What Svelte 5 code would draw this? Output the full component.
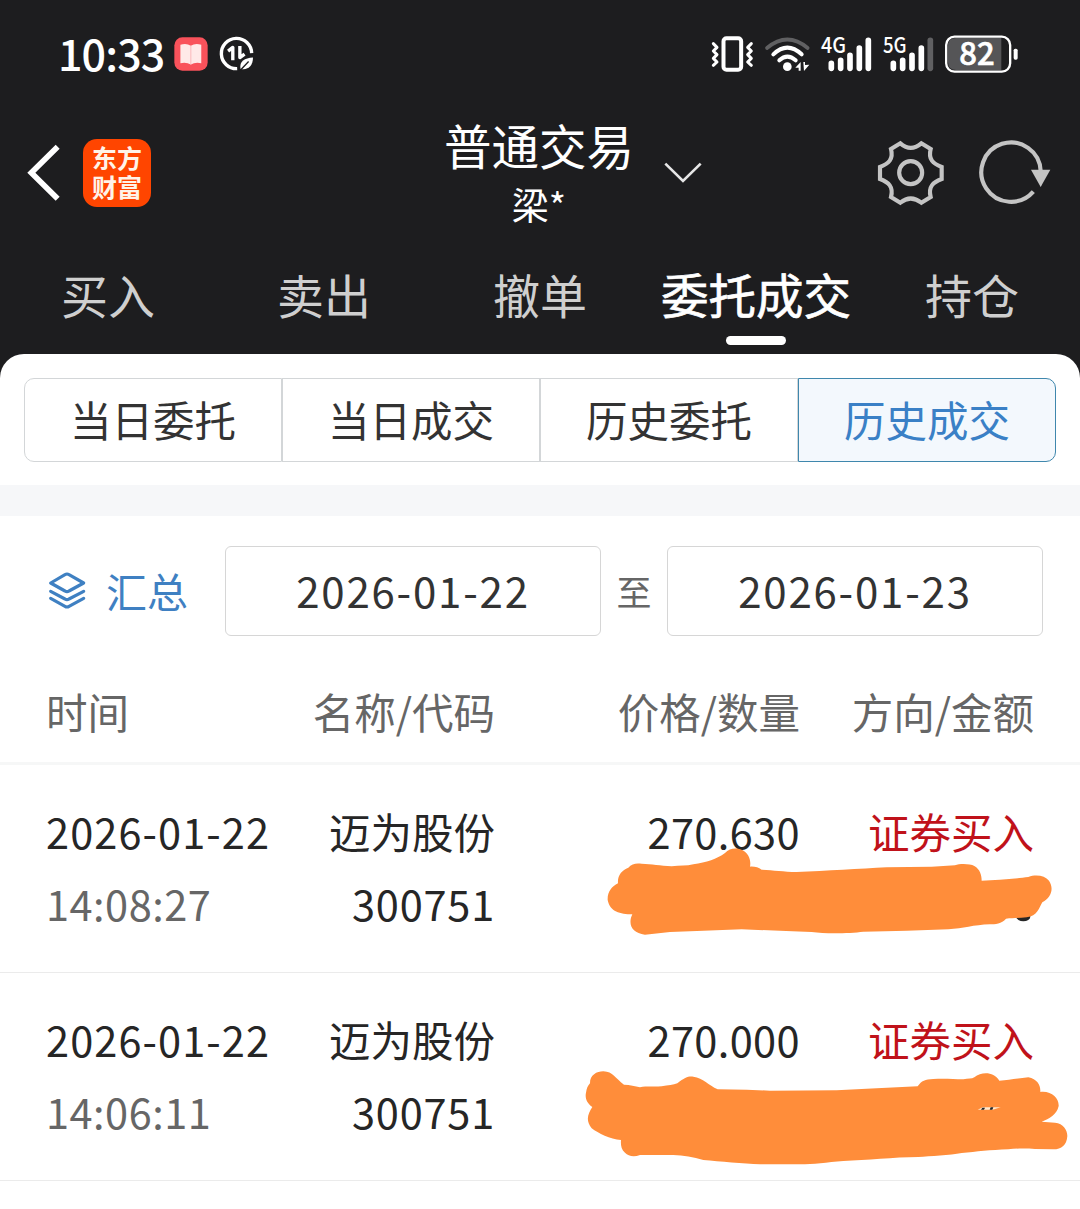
<script lang="ts">
  type Trade = {
    id: number
    date: string
    time: string
    name: string
    code: string
    price: string
    side: string
  }

  const tabs = ['买入', '卖出', '撤单', '委托成交', '持仓']
  const segments = ['当日委托', '当日成交', '历史委托', '历史成交']
  const columns = ['时间', '名称/代码', '价格/数量', '方向/金额']

  const trades: Trade[] = [
    { id: 1, date: '2026-01-22', time: '14:08:27', name: '迈为股份', code: '300751', price: '270.630', side: '证券买入' },
    { id: 2, date: '2026-01-22', time: '14:06:11', name: '迈为股份', code: '300751', price: '270.000', side: '证券买入' },
  ]

  let activeTab = $state('委托成交')
  let activeSegment = $state('历史成交')
  let from = $state('2026-01-22')
  let to = $state('2026-01-23')
</script>

<div class="screen">
  <header>
    <div class="status">
      <span class="clock">10:33</span>
      <svg class="book" viewBox="403 49 101 101">
        <rect x="404" y="50" width="99" height="99" rx="24" fill="#f9525b" />
        <path d="M422 72 Q440 66 453 75 Q466 66 484 72 V127 Q466 123 453 131 Q440 123 422 127Z" fill="#ffe9e8" />
        <path d="M453 75 V131" stroke="#fbb9bb" stroke-width="3" />
      </svg>
      <svg class="saver" viewBox="536 48 104 104" fill="none" stroke="#fff">
        <path d="M633 99 A45 45 0 1 0 590 145" stroke-width="10" />
        <path d="M563 93 L577 82 V120 M598 78 V112 L612 102" stroke-width="10" stroke-linejoin="round" />
        <path d="M600 146 C596 122 612 114 637 112 C637 136 624 150 600 146Z" fill="#fff" stroke="none" />
        <path d="M598 151 L624 124" stroke="#1d1d1f" stroke-width="4" />
      </svg>

      <div class="signals">
        <svg width="42.67" height="40" viewBox="32 40 128 120" fill="none" stroke="#fff">
          <rect x="69.500" y="53" width="53" height="94" rx="9" stroke-width="12" />
          <path d="M39 69 L50 80 L39 91 L50 102 L39 113 L50 124 L39 134" stroke-width="9" stroke-linecap="round" stroke-linejoin="round" />
          <path d="M153 69 L142 80 L153 91 L142 102 L153 113 L142 124 L153 134" stroke-width="9" stroke-linecap="round" stroke-linejoin="round" />
        </svg>
        <svg width="44.67" height="40" viewBox="194 40 134 120" fill="none" stroke="#fff" stroke-linecap="round">
          <path d="M200 82 Q261 31 322 82" stroke="#606062" stroke-width="11" />
          <path d="M219 101 Q261 61 304 101" stroke-width="12" />
          <path d="M237 119 Q261 97 286 119" stroke-width="12" />
          <circle cx="261" cy="138" r="13" fill="#fff" stroke="none" />
          <path d="M285 141 L301 124 V150 H295 V141Z M309 124 H314 V133 L327 132 L311 151Z" fill="#fff" stroke="none" />
        </svg>
        <svg width="50.67" height="40" viewBox="362 40 152 120">
          <text x="362" y="98" textLength="75" lengthAdjust="spacingAndGlyphs">4G</text>
          <g stroke="#fff" stroke-width="17" stroke-linecap="round">
            <path d="M393 128 V143 M421 119 V143 M449 104 V143 M477 82 V143 M504 59 V143" />
          </g>
        </svg>
        <svg width="50.67" height="40" viewBox="548 40 152 120">
          <text x="548" y="98" textLength="71" lengthAdjust="spacingAndGlyphs">5G</text>
          <g stroke="#fff" stroke-width="17" stroke-linecap="round">
            <path d="M579 128 V143 M607 119 V143 M635 104 V143 M663 82 V143" />
            <path d="M690 59 V143" stroke="#606062" />
          </g>
        </svg>
        <svg width="73.33" height="40" viewBox="735 40 220 120">
          <path d="M768 52 H904 V148 H768 Q744 148 744 124 V76 Q744 52 768 52Z" fill="#555557" />
          <rect x="738.500" y="48" width="192" height="105" rx="25" fill="none" stroke="#fff" stroke-width="7" />
          <rect x="941" y="84" width="12" height="33" rx="5" fill="#fff" />
          <text class="level" x="778" y="134" textLength="106" lengthAdjust="spacingAndGlyphs">82</text>
        </svg>
      </div>
    </div>

    <div class="nav">
      <button class="back" aria-label="返回">
        <svg width="34" height="58" viewBox="50 101 102 174" fill="none" stroke="#fff" stroke-width="17">
          <path d="M142 109 L63 187 L142 265" />
        </svg>
      </button>
      <div class="logo">东方<br />财富</div>
      <div class="title">
        <h1>普通交易</h1>
        <p>梁*</p>
      </div>
      <svg class="down" width="38" height="24" viewBox="705 150 114 72" fill="none" stroke="#e6e6e6" stroke-width="8">
        <path d="M709 158 L762 210 L815 158" />
      </svg>
      <div class="actions">
        <svg width="67" height="66" viewBox="50 87 201 198" fill="none" stroke="#c4c4c4" stroke-width="12.500">
          <path d="M120 97 Q151 124 183 97 L211 114 C203 145 218 158 244 168 V204 C218 214 203 227 211 258 L183 275 Q151 250 120 275 L92 258 C100 227 85 214 59 204 V168 C85 158 100 145 92 114Z" />
          <circle cx="151" cy="185" r="34.500" />
        </svg>
        <svg width="72" height="66" viewBox="356 87 216 198" fill="none" stroke="#c4c4c4" stroke-width="12.500">
          <path d="M519 242 A89 89 0 1 1 541 180" />
          <path d="M512 176 H570 L541 228Z" fill="#c4c4c4" stroke="none" />
        </svg>
      </div>
    </div>

    <nav class="tabs">
      {#each tabs as tab}
        <button class:active={tab === activeTab} onclick={() => (activeTab = tab)}>{tab}</button>
      {/each}
    </nav>
  </header>

  <main>
    <div class="segments">
      {#each segments as seg}
        <button class:active={seg === activeSegment} onclick={() => (activeSegment = seg)}>{seg}</button>
      {/each}
    </div>

    <div class="band"></div>

    <div class="filter">
      <button class="summary">
        <svg width="38" height="40" viewBox="145 692 114 120" fill="none" stroke="#3f80c2" stroke-width="9.500" stroke-linejoin="round" stroke-linecap="round">
          <path d="M196 703 Q202 699 208 703 L252 728 L208 752 Q202 756 196 752 L153 728Z" />
          <path d="M153 753 L196 776 Q202 780 208 776 L252 753" />
          <path d="M153 774 L196 798 Q202 802 208 798 L252 774" />
        </svg>
        <span>汇总</span>
      </button>
      <button class="date">{from}</button>
      <span class="until">至</span>
      <button class="date">{to}</button>
    </div>

    <div class="cols head">
      {#each columns as col}
        <span>{col}</span>
      {/each}
    </div>

    {#each trades as t, i (t.id)}
      <div class="cols row">
        <div>
          <p class="day">{t.date}</p>
          <p class="time">{t.time}</p>
        </div>
        <div>
          <p>{t.name}</p>
          <p class="code">{t.code}</p>
        </div>
        <div>
          <p class="price">{t.price}</p>
        </div>
        <div>
          <p class="side">{t.side}</p>
        </div>
        <!-- marker strokes hiding quantity and amount -->
        {#if i === 0}
          <svg class="marker first" viewBox="0 0 1560 420">
            <ellipse cx="1390" cy="290" rx="21" ry="14" fill="#262626" />
            <path
              fill="#ff8d3a"
              d="M174 190 C172 165 185 152 205 143 C215 130 230 129 245 131 C275 133 300 136 335 139 C360 136 380 138 400 133 C440 126 470 118 495 99 C515 78 550 83 565 107 C571 118 572 130 570 140 C585 139 595 143 605 149 C640 151 670 155 710 156 C800 153 900 146 980 142 L1115 140 L1185 136 C1200 130 1230 131 1243 138 C1260 148 1265 165 1265 182 C1310 180 1370 176 1405 171 C1430 162 1455 168 1467 182 C1482 205 1475 232 1447 247 C1438 262 1432 290 1400 292 C1380 295 1360 293 1338 296 C1325 312 1305 312 1290 313 C1240 315 1210 325 1165 328 L1040 332 L910 335 C870 340 800 342 755 336 C680 334 610 330 545 328 L430 332 L330 336 L255 344 C215 340 203 312 217 283 C180 283 150 275 143 240 C142 215 155 200 174 190Z"
            />
          </svg>
        {:else}
          <svg class="marker second" viewBox="0 0 1560 420">
            <path
              fill="#ff8d3a"
              d="M90 100 C90 75 110 64 130 64 C160 65 165 85 192 104 C210 105 225 108 240 112 C260 108 285 111 305 109 C325 105 340 105 352 100 C375 82 385 78 400 80 C430 85 445 105 473 118 L560 119 L630 122 L830 121 L950 115 L1073 109 C1085 92 1095 88 1120 87 C1155 84 1180 88 1210 88 C1225 85 1235 87 1243 82 C1265 65 1300 64 1318 92 C1350 90 1380 84 1405 82 C1432 88 1442 105 1441 126 C1475 122 1497 145 1496 168 C1490 195 1468 206 1445 215 L1485 218 C1510 220 1522 240 1522 258 C1520 285 1505 298 1480 298 L1425 297 C1400 295 1370 295 1345 298 C1290 300 1250 305 1205 309 C1170 316 1110 318 1075 321 C1000 322 920 330 850 333 C800 337 760 343 720 343 L600 343 C550 340 480 335 430 330 C400 320 370 317 340 315 L240 315 C220 322 205 318 195 308 C183 298 182 285 183 270 C150 268 115 250 95 235 C75 210 85 190 97 171 C78 158 75 140 78 128 C80 115 83 108 90 100Z"
            />
            <path d="M1253 179 L1268 172 L1322 172 L1298 179Z" fill="#ffe9cf" />
            <path d="M1263 179 L1267 173 H1275 L1272 179Z M1289 179 L1292 172 H1300 L1297 179Z" fill="#262626" />
          </svg>
        {/if}
      </div>
    {/each}
  </main>
</div>

<style>
  :global(body) {
    margin: 0;
    background: #fff;
  }
  .screen {
    width: 1080px;
    height: 1209px;
    overflow: hidden;
    background: #1d1d1f;
    font-family: 'Noto Sans CJK SC', sans-serif;
    color: #262626;
  }
  button {
    font: inherit;
    color: inherit;
    background: none;
    border: none;
    padding: 0;
    cursor: pointer;
  }
  svg {
    display: block;
    flex-shrink: 0;
    overflow: visible;
  }
  h1,
  p {
    margin: 0;
    font-weight: 400;
  }
  header {
    height: 354px;
    color: #fff;
  }

  .status {
    display: flex;
    align-items: center;
    height: 107px;
    padding: 0 62px 0 58px;
  }
  .clock {
    width: 116px;
    padding-bottom: 4px;
    font-size: 43px;
    font-weight: 500;
    line-height: 60px;
    letter-spacing: -0.9px;
    white-space: nowrap;
  }
  .book {
    width: 34px;
    height: 34px;
  }
  .saver {
    width: 35px;
    height: 35px;
    margin-left: 11px;
  }
  .signals {
    display: flex;
    gap: 11.33px;
    margin-left: auto;
  }
  .signals text {
    font-size: 64px;
    font-weight: 500;
    fill: #fff;
  }
  .signals .level {
    font-size: 94px;
    font-weight: 500;
    stroke: #fff;
    stroke-width: 2px;
  }

  .nav {
    display: flex;
    align-items: center;
    height: 131px;
    padding: 0 29px 0 27px;
  }
  .logo {
    box-sizing: border-box;
    width: 68px;
    height: 68px;
    margin-left: 22px;
    padding-top: 4px;
    border-radius: 14px;
    background: #ff4500;
    color: #fff3e8;
    font-size: 25px;
    font-weight: 700;
    line-height: 29px;
    text-align: center;
  }
  .title {
    width: 190px;
    margin-left: 293px;
    text-align: center;
    white-space: nowrap;
  }
  h1 {
    font-size: 47.5px;
    line-height: 62px;
  }
  .title p {
    font-size: 37px;
    line-height: 56px;
  }
  .down {
    margin-left: 30px;
  }
  .actions {
    display: flex;
    gap: 35px;
    margin-left: auto;
  }

  .tabs {
    display: flex;
    height: 116px;
  }
  .tabs button {
    display: flex;
    flex-direction: column;
    align-items: center;
    flex: 1;
    padding-top: 21px;
    font-size: 47px;
    line-height: 70px;
    color: #cfcfcf;
  }
  .tabs .active {
    color: #fff;
    font-size: 47.5px;
    -webkit-text-stroke: 0.7px #fff;
  }
  .tabs .active::after {
    content: '';
    width: 60px;
    height: 9px;
    margin-top: 7px;
    border-radius: 5px;
    background: #fff;
  }

  main {
    height: 855px;
    border-radius: 24px 24px 0 0;
    background: #fff;
  }
  .segments {
    display: flex;
    padding: 24px 24px 23px;
  }
  .segments button {
    box-sizing: border-box;
    flex: 1;
    height: 84px;
    padding-bottom: 3px;
    border: 1px solid #d3d6d8;
    font-size: 41.5px;
    line-height: 78px;
    color: #333;
  }
  .segments button:first-child {
    border-radius: 10px 0 0 10px;
  }
  .segments button:last-child {
    border-radius: 0 10px 10px 0;
  }
  .segments .active {
    border-color: #3f87ad;
    background: #f3f8fd;
    color: #3a80c6;
  }
  .band {
    height: 31px;
    background: #f6f7f9;
  }

  .filter {
    display: flex;
    align-items: center;
    height: 90px;
    padding: 30px 36px 30px 48px;
  }
  .summary {
    display: flex;
    align-items: center;
    width: 177px;
    color: #3f80c2;
    font-size: 41px;
    line-height: 60px;
  }
  .summary span {
    margin-left: 20px;
    padding-bottom: 3px;
  }
  .date {
    box-sizing: border-box;
    width: 376px;
    height: 90px;
    padding-bottom: 4px;
    border: 1px solid #d6d6d6;
    border-radius: 6px;
    color: #333;
    font-size: 42px;
    letter-spacing: 1.8px;
  }
  .until {
    width: 66px;
    padding-bottom: 2px;
    text-align: center;
    font-size: 35px;
    color: #666;
  }

  .cols {
    display: grid;
    grid-template-columns: 229px 220px 305px 234px;
    padding: 0 46px;
    font-size: 41.5px;
    text-align: right;
    white-space: nowrap;
  }
  .cols > :first-child {
    text-align: left;
  }
  .head {
    height: 96px;
    border-bottom: 3px solid #f6f7f7;
    color: #666;
    line-height: 91px;
  }
  .row {
    position: relative;
    box-sizing: border-box;
    height: 208px;
    padding-top: 30px;
    border-bottom: 1px solid #ebebeb;
    line-height: 72px;
  }
  .day {
    letter-spacing: 1.1px;
  }
  .time {
    color: #666;
    letter-spacing: 0.5px;
  }
  .code {
    letter-spacing: 0.8px;
  }
  .price {
    letter-spacing: 0.4px;
  }
  .side {
    color: #c0121a;
  }
  .marker {
    position: absolute;
    left: 560px;
    width: 520px;
    height: 140px;
  }
  .first {
    top: 55px;
  }
  .second {
    top: 77px;
  }
</style>
